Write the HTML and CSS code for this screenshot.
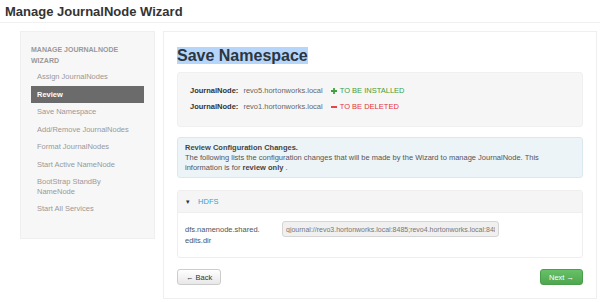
FILE: index.html
```html
<!DOCTYPE html>
<html lang="en">

<head>
    <meta charset="UTF-8">
    <meta name="viewport" content="width=device-width, initial-scale=1.0">
    <title>Manage JournalNode Wizard</title>
    <link rel="stylesheet" href="styles.css">
</head>

<body>
    <div class="page-header">
        <h1>Manage JournalNode Wizard</h1>
    </div>

    <div class="wizard">
        <div class="wizard-nav">
            <div class="nav-header">Manage JournalNode Wizard</div>
            <ul>
                <li>Assign JournalNodes</li>
                <li class="active">Review</li>
                <li>Save Namespace</li>
                <li>Add/Remove JournalNodes</li>
                <li>Format JournalNodes</li>
                <li>Start Active NameNode</li>
                <li>BootStrap StandBy NameNode</li>
                <li>Start All Services</li>
            </ul>
        </div>

        <div class="wizard-content">
            <h2><span class="selected">Save Namespace</span></h2>

            <div class="node-box">
                <div class="node-row">
                    <b>JournalNode:</b>
                    <span class="host">revo5.hortonworks.local</span>
                    <span class="added">
                        <svg class="sign" width="6" height="6" viewBox="0 0 6 6"><path d="M3 0v6M0 3h6" stroke="#3fa03f" stroke-width="1.8"/></svg>TO BE INSTALLED
                    </span>
                </div>
                <div class="node-row">
                    <b>JournalNode:</b>
                    <span class="host">revo1.hortonworks.local</span>
                    <span class="deleted">
                        <svg class="sign" width="6" height="6" viewBox="0 0 6 6"><path d="M0 3h6" stroke="#e5323a" stroke-width="1.8"/></svg>TO BE DELETED
                    </span>
                </div>
            </div>

            <div class="alert">
                <b>Review Configuration Changes.</b><br>
                The following lists the configuration changes that will be made by the Wizard to manage JournalNode. This<br>
                information is for <b>review only</b> .
            </div>

            <div class="config-panel">
                <div class="config-heading">
                    <span class="caret">&#9662;</span>
                    <a href="#">HDFS</a>
                </div>
                <div class="config-body">
                    <label>dfs.namenode.shared.<wbr>edits.dir</label>
                    <input type="text" readonly value="qjournal://revo3.hortonworks.local:8485;revo4.hortonworks.local:8485;revo5.hortonworks.local:8485/mycluster">
                </div>
            </div>

            <div class="wizard-buttons">
                <button class="btn">&larr; Back</button>
                <button class="btn btn-success">Next &rarr;</button>
            </div>
        </div>
    </div>
</body>

</html>
```

FILE: styles.css
```css
body {
    font-family: "Liberation Sans", Arial, sans-serif;
    font-size: 7.5px;
    color: #555;
    margin: 0;
    background-color: #fff;
}

.page-header {
    padding: 4px 5px 0;
    height: 18px;
    border-bottom: 1px solid #f0f0f0;
}

h1 {
    margin: 0;
    font-size: 13px;
    line-height: 15px;
    color: #333;
}

.wizard {
    display: flex;
    align-items: flex-start;
    gap: 8px;
    padding: 8px 3px 0 20px;
}

/* left step list */
.wizard-nav {
    width: 113px;
    padding: 12px 10px 20px;
    background-color: #f7f7f7;
    border: 1px solid #efefef;
}

.nav-header {
    font-size: 7px;
    font-weight: bold;
    line-height: 11px;
    text-transform: uppercase;
    color: #999;
    margin-bottom: 2px;
}

.wizard-nav ul {
    list-style-type: none;
    margin: 0;
    padding: 0;
}

.wizard-nav li {
    padding: 4px 6px;
    line-height: 9.5px;
    color: #999;
}

.wizard-nav li.active {
    background-color: #6b6b6b;
    color: #fff;
    font-weight: bold;
}

/* right content */
.wizard-content {
    flex: 1;
    padding: 14px 13px 13px;
    border: 1px solid #efefef;
}

h2 {
    margin: 0 0 7px;
    font-size: 16px;
    line-height: 19px;
    color: #2b3640;
}

.selected {
    background-color: #b6d5fb;
}

.node-box {
    padding: 10px 12px 11px;
    background-color: #f6f6f6;
    border: 1px solid #f0f0f0;
    border-radius: 3px;
}

.node-row {
    line-height: 16px;
}

.node-row b {
    color: #333;
    margin-right: 3px;
}

.host {
    margin-right: 6px;
    color: #666;
}

.sign {
    margin-right: 3px;
    vertical-align: -0.5px;
}

.added {
    color: #3fa03f;
}

.deleted {
    color: #e5323a;
}

.alert {
    margin-top: 10px;
    padding: 5px 7px 4px;
    line-height: 10px;
    background-color: #edf4f8;
    border: 1px solid #dbe8f0;
    border-radius: 3px;
}

.alert b {
    color: #444;
}

.config-panel {
    margin-top: 12px;
    border: 1px solid #eee;
    border-radius: 3px;
}

.config-heading {
    height: 21px;
    line-height: 21px;
    padding-left: 8px;
    background-color: #f5f5f5;
    border-bottom: 1px solid #eee;
}

.caret {
    font-size: 7px;
    color: #333;
    margin-right: 6px;
}

.config-heading a {
    color: #3a9fd6;
    text-decoration: none;
}

.config-body {
    display: flex;
    align-items: flex-start;
    padding: 5px 7px 11px;
}

.config-body label {
    width: 97px;
    padding-top: 6px;
    line-height: 11px;
    color: #555;
}

.config-body input {
    width: 209px;
    height: 14px;
    margin-top: 3px;
    padding: 0 3px;
    font-family: "Liberation Sans", Arial, sans-serif;
    font-size: 7px;
    color: #777;
    background-color: #f0f0f0;
    border: 1px solid #d5d5d5;
    border-radius: 3px;
}

.wizard-buttons {
    display: flex;
    justify-content: space-between;
    margin-top: 11px;
}

.btn {
    height: 16px;
    padding: 0 8px;
    font-family: "Liberation Sans", Arial, sans-serif;
    font-size: 7.5px;
    color: #333;
    background: linear-gradient(#fff, #e8e8e8);
    border: 1px solid #ccc;
    border-radius: 3px;
}

.btn-success {
    color: #fff;
    background: linear-gradient(#66c266, #4fa64f);
    border-color: #4a9d4a;
}
```
